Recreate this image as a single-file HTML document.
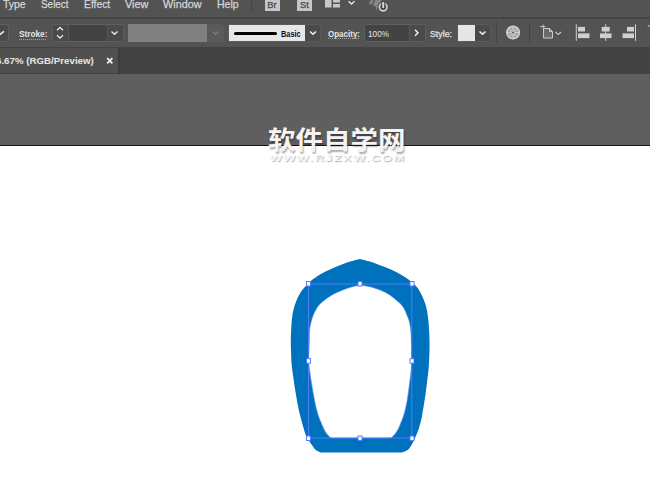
<!DOCTYPE html>
<html><head><meta charset="utf-8">
<style>
html,body{margin:0;padding:0;}
body{width:650px;height:494px;overflow:hidden;background:#fff;position:relative;font-family:"Liberation Sans","Noto Sans CJK SC",sans-serif;}
.abs{position:absolute;}
#menubar{left:0;top:0;width:650px;height:17px;background:#535353;}
#menusep{left:0;top:17px;width:650px;height:2px;background:#464646;}
#ctrl{left:0;top:19px;width:650px;height:28px;background:#535353;}
#tabbar{left:0;top:47px;width:650px;height:27px;background:#424242;}
#tab{left:0;top:48px;width:118px;height:25px;background:#505050;}
#tabgap{left:118px;top:48px;width:2px;height:25px;background:#3b3b3b;}
#paste{left:0;top:74px;width:650px;height:71px;background:#5f5f5f;}
#edge{left:0;top:145px;width:650px;height:1px;background:#161616;}
.menu{-webkit-text-stroke:0.25px #d6d6d6;color:#d6d6d6;font-size:10.5px;line-height:12px;top:-2.500px;white-space:nowrap;transform-origin:0 0;}
.lbl{color:#e4e4e4;font-size:8.6px;line-height:10px;font-weight:bold;white-space:nowrap;transform-origin:0 0;}
.dots{height:1px;background:repeating-linear-gradient(90deg,#a8a8a8 0 1px,transparent 1px 2px);}
.grp{border:1px solid #5f5f5f;box-sizing:border-box;border-radius:3px;background:#4a4a4a;overflow:hidden;}
.fld{background:#434343;top:0;bottom:0;}
</style></head><body>
<div id="menubar" class="abs"></div>
<div id="menusep" class="abs"></div>
<div id="ctrl" class="abs"></div>
<div id="tabbar" class="abs"></div>
<div id="tabgap" class="abs"></div>
<div id="tab" class="abs"></div>
<div id="paste" class="abs"></div>
<div id="edge" class="abs"></div>

<!-- menu -->
<div class="abs menu" id="m1" style="transform:scaleX(0.9927);left:2.800px;">Type</div>
<div class="abs menu" id="m2" style="transform:scaleX(0.9456);left:41px;">Select</div>
<div class="abs menu" id="m3" style="transform:scaleX(0.9829);left:84px;">Effect</div>
<div class="abs menu" id="m4" style="transform:scaleX(1.0320);left:125px;">View</div>
<div class="abs menu" id="m5" style="transform:scaleX(1.0332);left:163px;">Window</div>
<div class="abs menu" id="m6" style="transform:scaleX(0.9996);left:217px;">Help</div>

<!-- menubar icons -->
<div class="abs" style="left:251px;top:0;width:1px;height:12px;background:#444;"></div>
<div class="abs" style="left:265px;top:-4px;width:15px;height:15px;background:#c6c6c6;"></div>
<div class="abs" style="left:267.300px;top:-0.300px;color:#464646;font-size:9.300px;line-height:11px;-webkit-text-stroke:0.25px #464646;">Br</div>
<div class="abs" style="left:297px;top:-4px;width:15px;height:15px;background:#c6c6c6;"></div>
<div class="abs" style="left:300px;top:-0.300px;color:#464646;font-size:9.300px;line-height:11px;-webkit-text-stroke:0.25px #464646;">St</div>
<svg class="abs" style="left:0;top:0;" width="650" height="20" viewBox="0 0 650 20">
 <rect x="325" y="0" width="6.500" height="7.500" fill="#c8c8c8"/>
 <rect x="333" y="0" width="7" height="2.500" fill="#c8c8c8"/>
 <rect x="333" y="4" width="7" height="3.500" fill="#c8c8c8"/>
 <path d="M348.500 1.200 L351.500 4 L354.500 1.200" fill="none" stroke="#e8e8e8" stroke-width="1.400"/>
 <path d="M371 0 L373.600 0 L371.600 4.600 L368.800 4 Z" fill="#878787"/>
 <path d="M375.300 0 L381.800 0 L378.500 5.500 L376.500 10.800 L376 7 L372.800 5 Z" fill="#878787"/>
 <circle cx="383.200" cy="7.100" r="5.700" fill="#484848"/>
 <circle cx="383.200" cy="7.100" r="3.850" fill="none" stroke="#d2d2d2" stroke-width="1.700"/>
 <rect x="381.200" y="1" width="4" height="6.500" fill="#484848"/>
 <rect x="382.200" y="2" width="2" height="6" fill="#d2d2d2"/>
</svg>

<!-- tab text -->
<div class="abs" id="tabtxt" style="transform:scaleX(1.0232);left:-4.500px;top:54.300px;color:#e6e6e6;font-size:9.5px;line-height:14px;font-weight:bold;white-space:nowrap;transform-origin:0 0;">6.67% (RGB/Preview)</div>
<svg class="abs" style="left:105px;top:56px;" width="10" height="10" viewBox="0 0 10 10"><path d="M2.200 2.200 L7.400 7.400 M7.400 2.200 L2.200 7.400" stroke="#f0f0f0" stroke-width="1.700" fill="none"/></svg>

<!-- control bar -->
<div class="abs grp" style="left:-6px;top:24px;width:15px;height:18px;"></div>
<svg class="abs" style="left:0;top:24px;" width="8" height="18" viewBox="0 0 8 18"><path d="M-1.500 11.300 L0.300 10.300 L3.500 7.700" stroke="#efefef" stroke-width="1.500" fill="none" stroke-linecap="round"/></svg>

<div class="abs lbl" id="l1" style="transform:scaleX(0.9592);left:19px;top:29px;">Stroke:</div>
<div class="abs dots" style="left:19px;top:39px;width:28px;"></div>
<div class="abs grp" style="left:52px;top:24px;width:72px;height:18px;border-radius:2.500px;"><div class="abs fld" style="left:15px;width:40px;border-left:1px solid #585858;border-right:1px solid #585858;box-sizing:border-box;"></div></div>
<svg class="abs" style="left:52px;top:24px;" width="72" height="18" viewBox="0 0 72 18">
 <path d="M5 6.200 L8 3.400 L11 6.200 M5 11.300 L8 14.100 L11 11.300" fill="none" stroke="#e8e8e8" stroke-width="1.300"/>
 <path d="M59.500 7.500 L62.500 10.300 L65.500 7.500" fill="none" stroke="#e8e8e8" stroke-width="1.400"/>
</svg>

<div class="abs" style="left:128px;top:24px;width:79px;height:18px;background:#808080;"></div>
<div class="abs" style="left:207px;top:24px;width:17px;height:18px;background:#5a5a5a;border-radius:0 3px 3px 0;"></div>
<svg class="abs" style="left:207px;top:24px;" width="17" height="18" viewBox="0 0 17 18"><path d="M5.500 7.500 L8.500 10.300 L11.500 7.500" fill="none" stroke="#7c7c7c" stroke-width="1.300"/></svg>

<div class="abs grp" style="left:228px;top:24px;width:93px;height:18px;border-color:#5a5a5a;border-radius:1px 3px 3px 1px;"><div class="abs" style="left:0;top:0;bottom:0;width:76px;background:#e7e7e7;"></div></div>
<div class="abs" style="left:233.500px;top:31.500px;width:43px;height:3px;background:#000;border-radius:1.500px;"></div>
<div class="abs" id="basic" style="transform:scaleX(0.8453);left:281px;top:28.500px;color:#0a0a1e;font-size:8.700px;line-height:10px;font-weight:bold;transform-origin:0 0;white-space:nowrap;">Basic</div>
<svg class="abs" style="left:305px;top:24px;" width="16" height="18" viewBox="0 0 16 18"><path d="M5 7.500 L8 10.300 L11 7.500" fill="none" stroke="#f0f0f0" stroke-width="1.500"/></svg>

<div class="abs lbl" id="l2" style="transform:scaleX(0.9305);left:327.500px;top:28.500px;">Opacity:</div>
<div class="abs dots" style="left:328px;top:38px;width:31px;"></div>
<div class="abs grp" style="left:364px;top:24px;width:62px;height:18px;border-radius:2.500px;"><div class="abs fld" style="left:0;width:44.500px;border-right:1px solid #585858;box-sizing:border-box;"></div></div>
<div class="abs" id="pct" style="transform:scaleX(0.9552);left:367.700px;top:28.500px;color:#e4e4e4;font-size:8.600px;line-height:10px;white-space:nowrap;transform-origin:0 0;">100%</div>
<svg class="abs" style="left:409px;top:24px;" width="16" height="18" viewBox="0 0 16 18"><path d="M6 5.800 L9 8.800 L6 11.800" fill="none" stroke="#f0f0f0" stroke-width="1.500"/></svg>

<div class="abs lbl" id="l3" style="transform:scaleX(1.0233);left:430px;top:29px;font-weight:normal;color:#e0e0e0;-webkit-text-stroke:0.25px #e0e0e0;">Style:</div>
<div class="abs grp" style="left:457px;top:24px;width:34px;height:18px;border-color:#5a5a5a;border-radius:1px 3px 3px 1px;"><div class="abs" style="left:0;top:0;bottom:0;width:17px;background:#e6e6e6;"></div></div>
<svg class="abs" style="left:474px;top:24px;" width="16" height="18" viewBox="0 0 16 18"><path d="M5.500 7.500 L8.500 10.300 L11.500 7.500" fill="none" stroke="#f0f0f0" stroke-width="1.500"/></svg>

<div class="abs" style="left:495.500px;top:22px;width:1px;height:21px;background:#454545;"></div>
<div class="abs" style="left:529.400px;top:22px;width:1px;height:21px;background:#454545;"></div>

<svg class="abs" style="left:0;top:19px;" width="650" height="28" viewBox="0 19 650 28">
 <!-- wheel -->
 <circle cx="513.100" cy="32.500" r="6.300" fill="#a6a6a6" stroke="#cfcfcf" stroke-width="1.600"/>
 <g stroke="#d4d4d4" stroke-width="0.900">
  <path d="M513.100 25.800 V39.200 M506.400 32.500 H519.800 M508.400 27.800 L517.800 37.200 M517.800 27.800 L508.400 37.200"/>
 </g>
 <circle cx="513.100" cy="32.500" r="1.600" fill="#6a6a6a" stroke="#d8d8d8" stroke-width="0.700"/>
 <!-- doc icon -->
 <path d="M543.500 28.500 H549.500 L552.500 31.500 V38 H543.500 Z" fill="#6a6a6a" stroke="#cdcdcd" stroke-width="1"/>
 <path d="M549.500 28.500 V31.500 H552.500" fill="none" stroke="#cdcdcd" stroke-width="1"/>
 <path d="M540 26.600 H545.500 M543.200 24.600 V28.500" stroke="#cdcdcd" stroke-width="0.900"/>
 <path d="M555.500 32 L558.200 34.600 L561 32" fill="none" stroke="#cdcdcd" stroke-width="1.100"/>
 <!-- align left -->
 <rect x="575.800" y="24.300" width="1" height="16.500" fill="#d0d0d0"/>
 <rect x="578" y="26.900" width="7" height="4.600" fill="#cfcfcf"/>
 <rect x="578" y="33.400" width="11.500" height="4.700" fill="#cfcfcf"/>
 <!-- align center -->
 <rect x="605.200" y="24.300" width="1" height="16.500" fill="#d0d0d0"/>
 <rect x="601.700" y="26.900" width="8" height="4.600" fill="#cfcfcf"/>
 <rect x="600" y="33.400" width="11.500" height="4.700" fill="#cfcfcf"/>
 <!-- align right -->
 <rect x="635" y="24.300" width="1" height="16.500" fill="#d0d0d0"/>
 <rect x="627" y="26.900" width="7" height="4.600" fill="#cfcfcf"/>
 <rect x="622.500" y="33.400" width="11.500" height="4.700" fill="#cfcfcf"/>
 <rect x="647.800" y="25.400" width="3" height="1.200" fill="#c8c8c8"/>
</svg>

<!-- artwork -->
<svg class="abs" style="left:0;top:146px;" width="650" height="348" viewBox="0 146 650 348">
<path d="M360.0 258.9 C361.7 259.3 366.7 260.6 370.0 261.6 C373.3 262.7 376.5 263.9 380.0 265.2 C383.5 266.5 387.5 268.0 391.0 269.6 C394.5 271.2 397.9 272.9 400.8 274.6 C403.7 276.3 406.3 278.0 408.5 279.6 C410.7 281.2 412.4 282.6 414.2 284.3 C415.9 286.0 417.4 287.4 419.0 290.0 C420.6 292.6 422.6 296.7 423.9 300.0 C425.2 303.3 426.2 306.7 426.9 310.0 C427.6 313.3 427.9 316.7 428.3 320.0 C428.7 323.3 428.9 326.7 429.1 330.0 C429.3 333.3 429.4 336.7 429.5 340.0 C429.6 343.3 429.6 346.7 429.5 350.0 C429.4 353.3 429.3 356.7 429.1 360.0 C428.9 363.3 428.8 366.7 428.5 370.0 C428.2 373.3 427.8 375.8 427.3 380.0 C426.8 384.2 426.1 390.0 425.4 395.0 C424.7 400.0 423.7 405.8 423.0 410.0 C422.3 414.2 422.0 416.7 421.2 420.0 C420.4 423.3 419.3 427.0 418.3 430.0 C417.3 433.0 416.1 435.5 415.0 438.0 C413.9 440.5 412.7 443.0 411.5 445.0 C410.3 447.0 409.3 448.8 407.7 450.0 C406.1 451.2 402.9 452.1 402.0 452.5 L320.6 452.5 C319.8 452.1 317.2 451.2 315.8 450.0 C314.4 448.8 313.1 446.7 311.9 445.0 C310.7 443.3 309.5 441.7 308.5 440.0 C307.5 438.3 306.8 437.5 305.8 435.0 C304.8 432.5 303.9 429.2 302.7 425.0 C301.5 420.8 299.9 415.0 298.8 410.0 C297.7 405.0 296.9 400.0 296.0 395.0 C295.1 390.0 294.4 385.0 293.7 380.0 C293.0 375.0 292.1 370.0 291.7 365.0 C291.2 360.0 291.1 354.2 291.0 350.0 C290.9 345.8 290.8 343.3 290.8 340.0 C290.8 336.7 291.0 333.3 291.2 330.0 C291.4 326.7 291.4 323.3 291.8 320.0 C292.2 316.7 292.6 313.3 293.4 310.0 C294.2 306.7 295.3 303.2 296.7 300.0 C298.1 296.8 299.9 293.4 301.5 291.0 C303.1 288.6 304.4 287.4 306.0 285.7 C307.6 284.0 308.7 282.6 311.0 280.7 C313.3 278.8 316.8 276.3 320.0 274.4 C323.2 272.5 326.7 270.9 330.0 269.4 C333.3 267.9 336.7 266.5 340.0 265.2 C343.3 263.9 346.7 262.7 350.0 261.6 C353.3 260.6 358.3 259.3 360.0 258.9 Z" fill="#0071bc"/>
<path d="M360.3 285.0 C361.9 285.3 366.7 286.0 370.0 286.8 C373.3 287.6 376.8 288.7 380.0 290.0 C383.2 291.3 386.3 292.8 389.0 294.5 C391.7 296.2 393.9 298.2 396.0 300.0 C398.1 301.8 400.1 303.3 401.6 305.0 C403.1 306.7 403.9 308.3 404.8 310.0 C405.7 311.7 406.2 313.3 406.9 315.0 C407.6 316.7 408.4 318.3 408.9 320.0 C409.4 321.7 409.7 323.3 410.0 325.0 C410.3 326.7 410.5 327.5 410.7 330.0 C410.9 332.5 411.2 336.7 411.3 340.0 C411.4 343.3 411.5 346.5 411.5 350.0 C411.5 353.5 411.5 358.0 411.5 361.0 C411.5 364.0 411.6 364.8 411.3 368.0 C411.1 371.2 410.6 375.5 410.0 380.0 C409.4 384.5 408.6 390.8 408.0 395.0 C407.4 399.2 407.0 401.7 406.3 405.0 C405.6 408.3 404.9 411.7 403.8 415.0 C402.8 418.3 401.0 422.5 400.0 425.0 C399.0 427.5 398.7 428.3 397.7 430.0 C396.7 431.7 395.3 433.7 394.2 435.0 C393.1 436.3 391.4 437.5 390.8 438.0 L331.2 438.0 C330.6 437.5 328.8 436.3 327.7 435.0 C326.6 433.7 325.7 432.5 324.4 430.0 C323.1 427.5 321.3 423.3 320.0 420.0 C318.7 416.7 317.8 414.2 316.7 410.0 C315.6 405.8 314.4 400.0 313.5 395.0 C312.6 390.0 311.8 385.0 311.0 380.0 C310.2 375.0 309.4 368.2 309.0 365.0 C308.6 361.8 308.7 363.5 308.7 361.0 C308.7 358.5 308.9 353.5 309.0 350.0 C309.1 346.5 309.2 343.3 309.3 340.0 C309.4 336.7 309.4 332.5 309.6 330.0 C309.8 327.5 310.0 326.7 310.4 325.0 C310.8 323.3 311.2 321.7 311.7 320.0 C312.2 318.3 312.6 316.7 313.3 315.0 C314.0 313.3 314.9 311.7 315.8 310.0 C316.8 308.3 317.5 306.7 319.0 305.0 C320.5 303.3 322.5 301.7 324.7 300.0 C326.9 298.3 329.4 296.5 332.0 295.0 C334.6 293.5 337.0 292.4 340.0 291.2 C343.0 289.9 346.6 288.5 350.0 287.5 C353.4 286.5 358.6 285.4 360.3 285.0 Z" fill="#fff" stroke="#5b8cff" stroke-width="0.6"/>
<rect x="308.500" y="284" width="103.300" height="154" fill="none" stroke="#4f7dfc" stroke-width="1"/>
<g fill="#fff" stroke="#4f7dfc" stroke-width="1">
 <rect x="306.500" y="281.500" width="4" height="4.500"/><rect x="358" y="281.500" width="4" height="4.500"/><rect x="410" y="281.500" width="4" height="4.500"/>
 <rect x="306.500" y="358.700" width="4" height="4.500"/><rect x="410" y="358.700" width="4" height="4.500"/>
 <rect x="306.500" y="436" width="4" height="4.500"/><rect x="358" y="436" width="4" height="4.500"/><rect x="410" y="436" width="4" height="4.500"/>
</g>
</svg>

<!-- watermark -->
<div class="abs" id="wm1" style="left:268px;top:122.300px;color:#f4f4f4;font-size:25.500px;font-weight:bold;transform:scaleX(1.078);transform-origin:0 0;white-space:nowrap;line-height:36px;text-shadow:1px 1.500px 1.500px rgba(0,0,0,.32);">软件自学网</div>
<div class="abs" id="wm2" style="transform:scaleX(1.4007);left:270px;top:151.500px;color:#fdfdfd;font-size:9px;line-height:12px;font-weight:normal;letter-spacing:1.2px;white-space:nowrap;transform-origin:0 0;text-shadow:0.500px 1px 1px rgba(0,0,0,.4);">WWW.RJZXW.COM</div>


</body></html>
